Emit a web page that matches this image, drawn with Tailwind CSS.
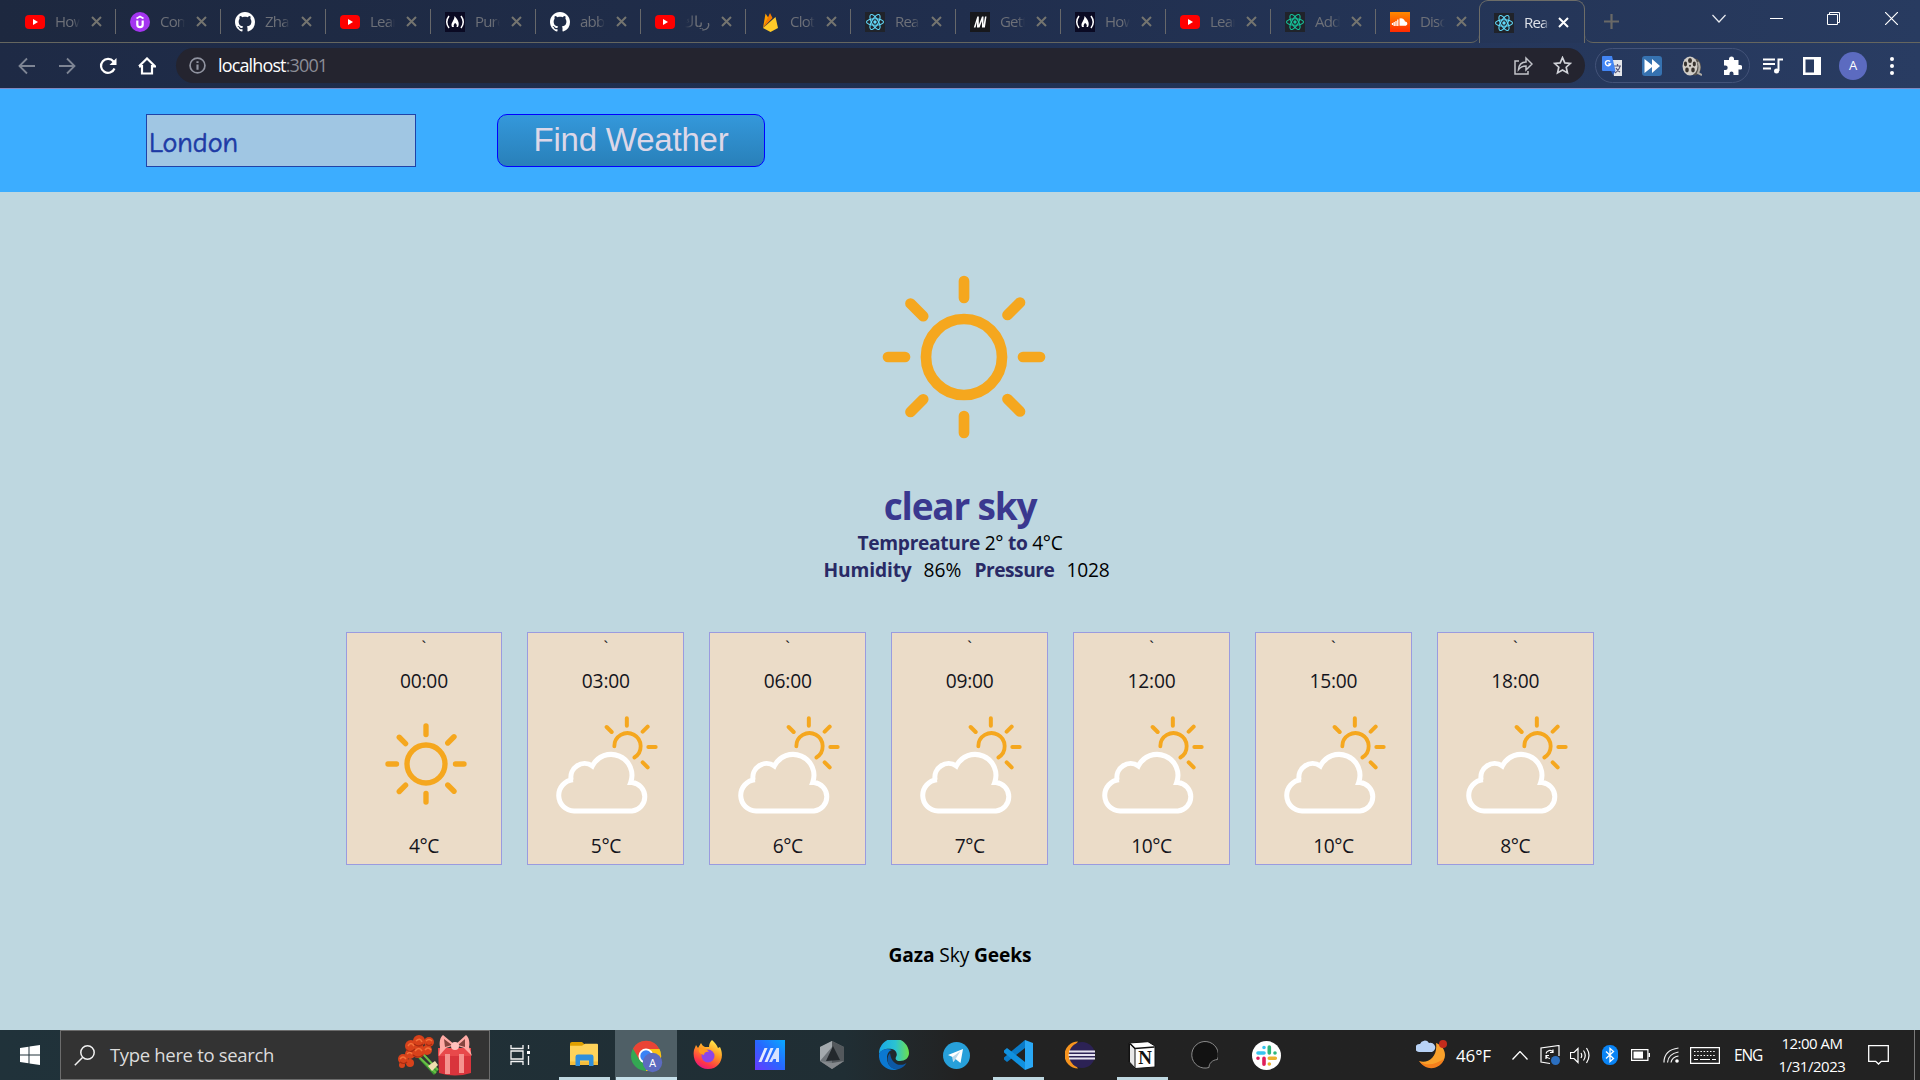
<!DOCTYPE html>
<html lang="en">
<head>
<meta charset="utf-8">
<title>React App</title>
<script src="https://cdn.jsdelivr.net/npm/@tailwindcss/browser@4"></script>
</head>
<body class="w-[1920px] h-[1080px] overflow-hidden flex flex-col font-['Open_Sans',sans-serif] bg-[#bed7e0]">

<svg class="absolute size-0">
  <defs>
    <linearGradient id="sc" x2="0" y2="1"><stop stop-color="#ff8a00"/><stop offset="1" stop-color="#ff2a00"/></linearGradient>
    <symbol id="youtube" viewBox="0 0 20 20"><rect y="3" width="20" height="14" rx="4" fill="#f00"/><path d="M8 7v6l5-3z" fill="#fff"/></symbol>
    <symbol id="udemy" viewBox="0 0 20 20"><circle cx="10" cy="10" r="10" fill="#a435f0"/><path d="M6.500 6.500 10 4.500l3.500 2" fill="none" stroke="#fff" stroke-width="1.700"/><path d="M7.300 8.500v4a2.700 2.700 0 0 0 5.400 0v-4" fill="none" stroke="#fff" stroke-width="2.200"/></symbol>
    <symbol id="github" viewBox="0 0 16 16"><path fill="#fff" d="M8 0C3.580 0 0 3.580 0 8c0 3.540 2.290 6.530 5.470 7.590.4.070.55-.17.55-.38 0-.19-.01-.82-.01-1.490-2.010.37-2.530-.49-2.690-.94-.09-.23-.48-.94-.82-1.130-.28-.15-.68-.52-.01-.53.63-.01 1.080.58 1.230.82.72 1.210 1.870.87 2.330.66.07-.52.28-.87.51-1.070-1.780-.2-3.640-.89-3.640-3.950 0-.87.31-1.590.82-2.150-.08-.2-.36-1.020.08-2.120 0 0 .67-.21 2.200.82.64-.18 1.320-.27 2-.27s1.360.09 2 .27c1.530-1.040 2.200-.82 2.200-.82.44 1.100.16 1.920.08 2.120.51.56.82 1.270.82 2.150 0 3.070-1.870 3.750-3.650 3.950.29.25.54.73.54 1.480 0 1.070-.01 1.930-.01 2.200 0 .21.15.46.55.38A8.010 8.010 0 0 0 16 8c0-4.420-3.580-8-8-8z"/></symbol>
    <symbol id="fcc" viewBox="0 0 20 20"><rect width="20" height="20" fill="#0a0a23"/><path d="M4 4Q-.5 10 4 16M16 4q4.500 6 0 12" fill="none" stroke="#fff" stroke-width="1.500"/><path d="M9.500 4c3 3 5.500 7 3.500 11h-1.500c1-2-.5-3.500-1.500-4-1 1.500-2 2.500-1 4H7c-2-4 2.500-6 2.500-11z" fill="#fff"/></symbol>
    <symbol id="firebase" viewBox="0 0 20 20"><path d="M3 16 5.500 1.500 8.500 6z" fill="#ffa000"/><path d="M3 16 10 1l2.500 5z" fill="#f57c00"/><path d="M3 16 15.500 5 18 16l-7.500 4z" fill="#ffca28"/></symbol>
    <symbol id="react" viewBox="0 0 20 20"><rect width="20" height="20" fill="#20232a"/><g fill="none" stroke="currentColor" stroke-width="1.100"><ellipse cx="10" cy="10" rx="8.500" ry="3.300"/><ellipse cx="10" cy="10" rx="8.500" ry="3.300" transform="rotate(60 10 10)"/><ellipse cx="10" cy="10" rx="8.500" ry="3.300" transform="rotate(120 10 10)"/></g><circle cx="10" cy="10" r="1.700" fill="currentColor"/></symbol>
    <symbol id="mui" viewBox="0 0 20 20"><rect width="20" height="20" fill="#17181c"/><path d="M3.800 15.500 7.300 4.500h1.500v8.500L12 4.500h1.500V13L15 4.500h1.500l-1.600 11H12V9l-2.500 6.500H7V10l-1.500 5.500z" fill="#fff"/></symbol>
    <symbol id="soundcloud" viewBox="0 0 20 20"><rect width="20" height="20" fill="url(#sc)"/><path d="M9.500 6.500A4 4 0 0 1 15 9.500a2.200 2.200 0 0 1 .8 4.300H9.500z" fill="#fff"/><path d="M2.500 11v2M4.200 10v4M6 9v5M7.800 7.500V14" stroke="#fff" stroke-width="1.300"/></symbol>
    <symbol id="sun" viewBox="-84 -84 168 168"><g fill="none" stroke="#f5a71e" stroke-width="10.700" stroke-linecap="round"><circle r="38"/><path d="M0-76v17M0 59v17M-76 0h17M59 0h17M-53.500-53.500l12.700 12.700M56-54.500 43.500-42M-53.500 55l12.700-12.700M43.500 42 56 54.500"/></g></symbol>
    <symbol id="cloud-sun" viewBox="640 280 324 306"><g fill="none" stroke="#f5a71e" stroke-width="12" stroke-linecap="round"><path stroke-width="11.500" d="M824 377A39.500 39.500 0 1 1 884 410.500"/><path d="M861.500 293v22M801 319l15 15M924 318l-15 15M926 379h22M909 425l15 15"/></g><path fill="none" stroke="#fff" stroke-width="15" d="M703 571H877A43 43 0 0 0 877 485.500H873A62.700 62.700 0 0 0 758 436 41 41 0 0 0 694.500 478L700 477.300A46.950 46.950 0 0 0 703 571z"/></symbol>
  </defs>
</svg>

<!-- Tab strip -->
<header class="h-[43px] shrink-0 flex bg-linear-to-r from-[#1d283f] via-[#202e4d] to-[#283b60]">
  <div id="tabs" class="flex h-[43px] w-[1479px] shrink-0 rounded-br-[8px] border-b border-[#65665f] pl-[11px]"></div>
  <div class="flex h-[43px] w-[106px] shrink-0 items-center rounded-t-[9px] border border-b-0 border-[#6d6d68] pl-[14px] pt-px">
    <svg class="size-5 text-[#61dafb]"><use href="#react"/></svg>
    <span class="ml-[10px] w-[25px] overflow-hidden whitespace-nowrap text-[15px] text-[#dde1e8] tracking-[-0.8px] mask-r-from-75%">React</span>
    <svg class="ml-[9px] size-[11px]" viewBox="0 0 11 11" stroke="#fff" stroke-width="2"><path d="m1 1 9 9M10 1 1 10"/></svg>
  </div>
  <div class="flex flex-1 items-start rounded-bl-[8px] border-b border-[#65665f] pl-[19px]">
    <svg class="mt-[14px] size-[15px]" viewBox="0 0 15 15" stroke="#696967" stroke-width="2.200"><path d="M7.500 0v15M0 7.500h15"/></svg>
    <svg class="ml-[93px] mt-[14px] h-[9px] w-[14px]" viewBox="0 0 14 9" fill="none" stroke="#e8ebf0" stroke-width="1.200"><path d="m.5 1 6.500 7L13.500 1"/></svg>
    <svg class="ml-[44px] mt-[18px] h-px w-[13px]"><rect width="13" height="1" fill="#fff"/></svg>
    <svg class="ml-[44px] mt-[12px] size-[13px]" viewBox="0 0 13 13" fill="none" stroke="#fff"><path d="M.5 2.500h10v10H.5zM2.500 2.500v-2h10v10h-2"/></svg>
    <svg class="ml-[45px] mt-[12px] size-[13px]" viewBox="0 0 13 13" stroke="#fff" stroke-width="1.200"><path d="m0 0 13 13M13 0 0 13"/></svg>
  </div>
</header>

<!-- Toolbar -->
<nav class="h-[46px] shrink-0 flex items-center border-b border-[#7f88c0] bg-linear-to-r from-[#1e2a45] via-[#203052] to-[#293c62] pl-[18px]">
  <svg class="size-[18px]" viewBox="0 0 18 18" fill="none" stroke="#7e8594" stroke-width="1.800"><path d="M17 9H2M9 1.500 1.500 9 9 16.500"/></svg>
  <svg class="ml-[22px] size-[18px]" viewBox="0 0 18 18" fill="none" stroke="#7e8594" stroke-width="1.800"><path d="M1 9h15M9 1.500 16.500 9 9 16.500"/></svg>
  <svg class="ml-[23px] size-[18px]" viewBox="0 0 18 18" fill="none" stroke="#fff" stroke-width="2.200"><path d="M15.500 11.500A7 7 0 1 1 14.500 4.500L16 6"/><path d="M17.500 1v7h-7z" fill="#fff" stroke="none"/></svg>
  <svg class="ml-[21px] size-[18px]" viewBox="0 0 18 18" fill="none" stroke="#fff" stroke-width="2.200"><path d="M4 8v8.500h10V8M1 9.300 9 1.500l8 7.800h-3M1 9.300h3"/></svg>
  <div class="ml-[20px] flex h-[35px] w-[1409px] shrink-0 items-center rounded-full bg-[#24242f] pl-[13px]">
    <svg class="size-[17px]" viewBox="0 0 16 16" fill="none" stroke="#9093a0" stroke-width="1.600"><circle cx="8" cy="8" r="7"/><path stroke-width="2" d="M8 7v5M8 4v1.700"/></svg>
    <span class="ml-[12px] whitespace-nowrap text-[18px] tracking-[-0.86px] text-[#8b8d97]"><span class="text-white">localhost</span>:3001</span>
    <svg class="ml-auto mr-[20px] size-[19px]" viewBox="0 0 19 19" fill="none" stroke="#c2c4ca" stroke-width="1.500"><path d="M5 5H1v13h13v-3"/><path d="M4.500 13.500c.5-5 3.500-7.500 7.500-7.500V2l6 6-6 6v-4c-3.500 0-5.500 1-7.500 3.500z"/></svg>
    <svg class="mr-[13px] size-[19px]" viewBox="0 0 18 18" fill="none" stroke="#d0d2d8" stroke-width="1.600"><path d="m9 1.500 2.200 5 5.300.5-4 3.600 1.200 5.400L9 13.200 4.300 16l1.200-5.400-4-3.600 5.300-.5z"/></svg>
  </div>
  <div class="ml-[10px] flex h-[35px] w-[155px] shrink-0 items-center gap-[20px] rounded-full border border-[#435379] pl-[6px]">
    <svg class="size-5" viewBox="0 0 20 20"><path d="M9 4h11v16H12z" fill="#e4e6ea"/><path d="M12 10h7M15.500 8v2M13 17c3-2 4.500-4 5-7M14 12c1 2 2 3 4 4" fill="none" stroke="#557" stroke-width="1.200"/><path d="M1 0h9l3.500 15H1a1 1 0 0 1-1-1V1a1 1 0 0 1 1-1z" fill="#4285f4"/><path d="M9 15h4.500L11 19z" fill="#2b5dc0"/><path d="M8 5.500A2.600 2.600 0 1 0 8.500 8H6.200" fill="none" stroke="#fff" stroke-width="1.400"/></svg>
    <svg class="size-5" viewBox="0 0 20 20"><rect width="20" height="20" rx="3" fill="#3672b0"/><path d="M2.500 3 10 9V3l8 7-8 7v-6l-7.500 6z" fill="#fff"/></svg>
    <svg class="size-5" viewBox="0 0 20 20"><ellipse cx="13" cy="11" rx="6" ry="8.500" fill="#55524e"/><path d="M16 6q3 5 0 11l4 2" fill="none" stroke="#b0aca5" stroke-width="2"/><ellipse cx="8" cy="10" rx="7.500" ry="9.500" fill="#d1cdc7"/><g fill="#37322e"><ellipse cx="8" cy="4.500" rx="2" ry="2.600"/><ellipse cx="3.500" cy="8" rx="1.600" ry="2.400"/><ellipse cx="12.300" cy="8" rx="1.600" ry="2.400"/><ellipse cx="5" cy="14" rx="1.800" ry="2.400"/><ellipse cx="11" cy="14" rx="1.800" ry="2.400"/><circle cx="8" cy="9.700" r="1"/></g></svg>
    <svg class="size-5" viewBox="0 0 20 20"><path fill="#fff" d="M7 3a2.500 2.500 0 0 1 5 0v1h4.500v5H18a2.300 2.300 0 0 1 0 4.600h-1.500V19h-5v-1.500a2 2 0 0 0-4 0V19H2v-5h1.500a2.200 2.200 0 0 0 0-4.400H2V4h5z"/></svg>
  </div>
  <svg class="ml-[13px] h-[16px] w-[20px]" viewBox="0 0 20 16" fill="none" stroke="#fff" stroke-width="2"><path d="M0 1.500h12M0 6h12M0 10.500h8M15.500 13V1.500H20"/><circle cx="13.500" cy="13" r="2.500" fill="#fff" stroke="none"/></svg>
  <svg class="ml-[20px] size-[18px]" viewBox="0 0 18 18"><path fill="#fff" fill-rule="evenodd" d="M0 0h18v18H0zM2.500 2.500v13H11v-13z"/></svg>
  <div class="ml-[18px] flex size-7 items-center justify-center rounded-full bg-[#5c6bc0] text-[13px] text-white">A</div>
  <svg class="ml-[23px] h-[18px] w-[4px]" viewBox="0 0 4 18" fill="#fff"><circle cx="2" cy="2" r="2"/><circle cx="2" cy="9" r="2"/><circle cx="2" cy="16" r="2"/></svg>
</nav>

<!-- Search form -->
<form class="h-[103px] shrink-0 flex items-start bg-[#3cadff] pl-[146px] pt-[25px]">
  <div class="flex h-[53px] w-[270px] items-center border border-[#1f43a8] bg-[#a0c6e3] pl-[2px] pt-[4px] font-['Comic_Sans_MS','Comic_Neue','Noto_Sans',sans-serif] text-[28px] text-[#1d3aa5] [-webkit-text-stroke:0.6px_#1d3aa5]">London</div>
  <div class="ml-[81px] flex h-[53px] w-[268px] justify-center rounded-[10px] border border-[#0000ff] bg-linear-to-b from-[#3498db] to-[#2980b9] pt-[5px] font-['Liberation_Sans',sans-serif] text-[33px] leading-[40px] tracking-[-0.2px] text-[#dcd7e8]">Find Weather</div>
</form>

<!-- Current weather -->
<main class="flex flex-1 flex-col items-center text-[19.200px] leading-[27px]">
  <svg class="ml-[7px] mt-[81px] size-[168px]"><use href="#sun"/></svg>
  <h1 class="mt-[38px] text-[37px] leading-[54px] font-bold tracking-[-1.2px] text-[#3a388f]">clear sky</h1>
  <p class="mt-[-4px] tracking-[-0.32px]"><b class="text-[#292a66]">Tempreature</b> 2° <b class="text-[#292a66]">to</b> 4°C</p>
  <p class="flex pl-[13px]"><b class="tracking-[-0.15px] text-[#292a66]">Humidity</b><span class="ml-[12px]">86%</span><b class="ml-[13px] tracking-[-0.48px] text-[#292a66]">Pressure</b><span class="ml-[12px] tracking-[-0.22px]">1028</span></p>

  <section id="hours" class="mt-[49px] flex gap-[25px] self-start pl-[345.500px] text-[#14141c]"></section>

  <footer class="mt-[76px] tracking-[-0.12px] text-black"><b>Gaza</b> Sky <b>Geeks</b></footer>
</main>

<!-- Taskbar -->
<footer class="h-[50px] shrink-0 flex items-center bg-linear-to-r from-[#20323a] from-0% via-[#202e34] via-44% to-[#222222] to-50%">
  <div class="flex w-[60px] justify-center"><svg class="size-5" viewBox="0 0 20 20" fill="#fff"><path d="M0 3l8.500-1.300v7.800H0zM9.500 1.500 20 0v9.500H9.500zM0 10.500h8.500v7.800L0 17zM9.500 10.500H20V20L9.500 18.500z"/></svg></div>
  <div class="flex h-[50px] w-[430px] items-center border border-[#6c6c6c] bg-[#333333] pl-[13px]">
    <svg class="size-[21px]" viewBox="0 0 21 21" fill="none" stroke="#f2f2f2" stroke-width="1.500"><circle cx="13.500" cy="7.500" r="6.700"/><path d="M8.500 12.500.8 20.200"/></svg>
    <span class="ml-[15px] whitespace-nowrap text-[18.500px] tracking-[-0.33px] text-[#dcdcdc]">Type here to search</span>
    <svg class="ml-auto mr-[17px] h-[42px] w-[74px]" viewBox="0 0 74 42">
      <path d="m20 24 20 12-4 5z" fill="#3c9a32"/><path d="M20 22l18 17M25 20l15 16" stroke="#69bf45" stroke-width="2"/><path d="m30 32 7-5 3 4-6 6z" fill="#f0dfb0"/>
      <g fill="#d8421b"><circle cx="13" cy="12" r="6"/><circle cx="21" cy="7" r="6"/><circle cx="31" cy="8" r="5"/><circle cx="29" cy="16" r="5"/><circle cx="20" cy="17" r="7"/><circle cx="12" cy="20" r="5"/><circle cx="5" cy="25" r="5"/><circle cx="12" cy="29" r="4"/><circle cx="4" cy="31" r="3"/></g>
      <g fill="none" stroke="#a82c12" stroke-width="1.200"><path d="M8 15q4 5 9 0M16 10q5 4 9 0M15 21q5 4 10 0M2 28q4 3 7 0M28 10q3 3 6 0"/></g>
      <g fill="none" stroke="#f5713a" stroke-width="1.500"><path d="M10 12q3-5 6 0M18 7q4-4 6 1M17 17q4-5 7 0M27 16q3-4 6 0M28 7q3-3 6 0M2 25q3-4 6 0M9 20q3-3 5 0"/></g>
      <path d="M40 15h33v24q-16 5-32 0z" fill="#d9343c"/><path d="M40 14h33v8H40z" fill="#e8494b"/><path d="M47 20h5v20h-5zM61 20h5v19h-5z" fill="#f5938f"/>
      <path d="M57 11 45 1c-3 2-4 8-3 12l-1 9 7-8zM57 11 68 1c3 2 4 8 3 12l3 9-8-8z" fill="#ffaaa5"/><path d="m46 5 8 6-7 2zM67 5l-7 6 7 2z" fill="#86453f"/><circle cx="57" cy="12" r="4" fill="#ffc1bd"/>
    </svg>
  </div>
  <div class="flex w-[63px] justify-center pr-[3px]"><svg class="size-5" viewBox="0 0 20 20" fill="none" stroke="#f5f5f5" stroke-width="1.300"><path d="M1 0v3.500h12V0M1 20v-3.500h12V20M1 6h12v8H1zM18.500 0v4M18.500 11v9"/><path d="M17 6h3v3h-3z" fill="#fff" stroke="none"/></svg></div>

  <div class="flex h-[50px] w-[62px] flex-col items-center justify-end">
    <svg class="mb-[11px] h-[24px] w-[28px]" viewBox="0 0 28 26" preserveAspectRatio="none"><path d="M0 2a2 2 0 0 1 2-2h10l3 3v5H0z" fill="#dfa000"/><path d="M0 4h12l3-2h12a1 1 0 0 1 1 1v21a1 1 0 0 1-1 1H1a1 1 0 0 1-1-1z" fill="#ffd35a"/><path d="M0 21h28v3a1 1 0 0 1-1 1H1a1 1 0 0 1-1-1z" fill="#f5bd3b"/><path d="M5.500 26V16a2.500 2.500 0 0 1 2.500-2.500h13a2.500 2.500 0 0 1 2.500 2.500v10h-4.500v-6h-9v6z" fill="#2f8fdc"/></svg>
    <div class="h-[3px] w-[51px] bg-[#bed7e0]"></div>
  </div>
  <div class="flex h-[50px] w-[62px] flex-col items-center justify-end bg-[#4f5f66]">
    <svg class="mb-[4px] ml-[2px] size-[34px]" viewBox="0 0 34 34"><circle cx="16" cy="17" r="15" fill="#34a853"/><path d="M16 17H31A15 15 0 0 1 16 32z" fill="#fbbc04"/><path d="M3 9.500A15 15 0 0 1 29.500 10H16l-6.500 11z" fill="#ea4335"/><path d="M16 10h13.500A15 15 0 0 1 16 32l6.500-11z" fill="#fbc116"/><circle cx="16" cy="17" r="7.500" fill="#fff"/><circle cx="16" cy="17" r="5.700" fill="#3b82f6"/><circle cx="22.500" cy="23.500" r="9.700" fill="#5c6bc0"/><text x="22.500" y="27.500" text-anchor="middle" font-size="11" fill="#fff" font-family="Roboto">A</text></svg>
    <div class="h-[3px] w-[61px] bg-[#c6e0ea]"></div>
  </div>
  <div class="flex w-[62px] justify-center"><svg class="size-[30px]" viewBox="0 0 30 30"><defs><linearGradient id="ff" x1=".8" y1="0" x2=".3" y2="1"><stop stop-color="#fff44f"/><stop offset=".45" stop-color="#ff9422"/><stop offset=".8" stop-color="#ff3647"/><stop offset="1" stop-color="#e31587"/></linearGradient></defs><path d="M19 0c3 3 5 5 6 8l2-1c5 10 0 22-12 22C5 29-1 20 1 10l2-5 2 3 3-5c1 2 2 3 4 4h4c0-3 1-5 3-7z" fill="url(#ff)"/><circle cx="15" cy="16" r="6.500" fill="#8d45e8"/><path d="M6 9c4-2 8 0 10 3-3-1-5 1-5 3-4-1-6-3-5-6z" fill="#ff9a1f"/></svg></div>
  <div class="flex w-[62px] justify-center"><svg class="size-[30px]" viewBox="0 0 30 30"><defs><linearGradient id="ma" x1="0" y1="1" x2="1" y2="0"><stop stop-color="#6a38ff"/><stop offset=".5" stop-color="#2867ff"/><stop offset="1" stop-color="#08aaff"/></linearGradient></defs><rect width="30" height="30" fill="url(#ma)"/><path d="M3.500 22 9.500 8h3L6.500 22zM9.500 22l6-14h3l-6 14z" fill="#e3eaff"/><path d="M14 22 21.500 8H24v14h-3v-3h-2.500L17 22z" fill="#d5e2ff"/></svg></div>
  <div class="flex w-[62px] justify-center"><svg class="h-[28px] w-[26px]" viewBox="1 0 26 28"><path d="M14 0 2 6v14l12 8 12-8V6z" fill="#6d7378"/><path d="M14 0 2 6v14l12-14z" fill="#a3a9ad"/><path d="M14 0v28l12-8V6z" fill="#53585c"/><path d="m15 5 7 14-14 1z" fill="#23282c"/><path d="m2 20 12 8 12-8-12 2z" fill="#85898d"/></svg></div>
  <div class="flex w-[62px] justify-center"><svg class="size-[30px]" viewBox="0 0 30 30"><defs><linearGradient id="e1"><stop stop-color="#18a8e8"/><stop offset=".55" stop-color="#2bc3d2"/><stop offset="1" stop-color="#6de04c"/></linearGradient></defs><path d="M0 14A15 15 0 0 1 30 13c0 5-4 8-9 8-4 0-5-2-4-4 2-3 0-7-4-8C7 8 2 10 0 14z" fill="url(#e1)"/><path d="M0 14c2-5 8-6 13-4-4 1-5 5-5 8 0 6 4 11 11 11.500C9 32-1 25 0 14z" fill="#0b78d1"/><path d="M11 13c-6 7 0 18 9 16 3-1 6-3 7.500-6-6 4-15 2-16.500-10z" fill="#0c58a5"/></svg></div>
  <div class="flex w-[62px] justify-center"><svg class="size-[27px]" viewBox="0 0 27 27"><circle cx="13.500" cy="13.500" r="13.500" fill="#27a0da"/><path d="m5 13 15-6-2.500 14-5-4-2.500 3-.5-5z" fill="#fff"/><path d="m9.500 15 8-6-5 8-2 3z" fill="#b9d8ea"/></svg></div>
  <div class="flex h-[50px] w-[62px] flex-col items-center justify-end">
    <svg class="mb-[7px] size-[30px]" viewBox="0 0 30 30"><path d="M22 0v8L4 22l-3-2.500v-2z" fill="#0a7bc8"/><path d="M22 30v-8L4 8 1 10.500v2z" fill="#1091e0"/><path d="m22 0 8 3v24l-8 3z" fill="#2aa8f5"/></svg>
    <div class="h-[3px] w-[51px] bg-[#bed7e0]"></div>
  </div>
  <div class="flex w-[62px] justify-center"><svg class="size-[30px]" viewBox="0 0 30 30"><path d="M13 1.500A13.500 13.500 0 0 0 13 28.500L10 24V6z" fill="#f7941e"/><circle cx="17" cy="15" r="13" fill="#2c2255"/><path d="M4 11.500h26M3.500 15h27M4 18.500h26" stroke="#e6e3f0" stroke-width="2"/></svg></div>
  <div class="flex h-[50px] w-[62px] flex-col items-center justify-end">
    <svg class="mb-[8px] size-[28px]" viewBox="0 0 28 28"><path d="M1 2 20 .7 27 5v21L7 27.500 1 21z" fill="#fff" stroke="#111"/><path d="M1.500 2.500 7 8v19L1.500 21z" fill="#e8e8e8" stroke="#111"/><path d="M2 2.500 7 7.500 26.500 6" fill="none" stroke="#111" stroke-width="1.500"/><text x="17" y="23" text-anchor="middle" font-family="Liberation Serif" font-weight="bold" font-size="19" fill="#111">N</text></svg>
    <div class="h-[3px] w-[51px] bg-[#bed7e0]"></div>
  </div>
  <div class="flex w-[62px] justify-center"><svg class="size-[28px]" viewBox="0 0 28 28"><path d="M27.500 18.500A13.300 13.300 0 1 0 19 26.500c0-4 3-7.500 8.500-8z" fill="#121212" stroke="#8a8a8a"/></svg></div>
  <div class="flex w-[62px] justify-center"><svg class="size-[29px]" viewBox="0 0 29 29" stroke-width="3.600" stroke-linecap="round"><circle cx="14.500" cy="14.500" r="14.500" fill="#fff"/><path d="M12 6.500v0M6 12h6" stroke="#36c5f0"/><path d="M17.300 6v6M23 12v0" stroke="#2eb67d"/><path d="M17.300 17.300h6M17.300 23v0" stroke="#ecb22e"/><path d="M12 17.300v6M6 17.300v0" stroke="#e01e5a"/></svg></div>

  <div class="ml-auto flex h-[50px] w-[504px] items-center whitespace-nowrap text-white">
    <svg class="h-[30px] w-[31px]" viewBox="0 0 31 30"><path d="M20 3c5 2 9 6 9 12 0 10-15 19-26 6 9 3 19-4 17-18z" fill="#f9a12b"/><path d="M3 21c8 6 17 3 25-2-2 8-16 15-25 2z" fill="#f47f1c"/><path d="M3 12a4 4 0 0 1 1-8 5 5 0 0 1 9-1 4.500 4.500 0 0 1 3 9z" fill="#b8d2f5"/><circle cx="27" cy="4" r="4" fill="#c42b1c"/></svg>
    <span class="ml-[9px] pt-[2px] text-[17px] tracking-[-0.13px]">46°F</span>
    <svg class="ml-[21px] h-[9px] w-[16px]" viewBox="0 0 16 9" fill="none" stroke="#fff" stroke-width="1.300"><path d="m.5 8.500 7.500-8 7.500 8"/></svg>
    <svg class="ml-[12px] size-[20px]" viewBox="0 0 20 20" fill="none" stroke="#fff" stroke-width="1.200"><path d="M10 18.500 1 17V3l18-2.500V11"/><path d="M6 8.500a4 4 0 0 1 7-1.500M13 4.500v3h-3M6 14v-3.500h3M6 11c1 2 2.500 2.500 4 2.500"/><circle cx="15.500" cy="15.500" r="4.500" fill="#2b6fc0" stroke="none"/></svg>
    <svg class="ml-[10px] h-[17px] w-[20px]" viewBox="0 0 20 17" fill="none" stroke="#fff" stroke-width="1.200"><path d="M.5 5.500H4l4-4v14l-4-4H.5zM11 6q1.500 2.500 0 5M13.500 3.500q3.500 5 0 10M16.500 1q5 7.500 0 15"/></svg>
    <svg class="ml-[12px] h-[20px] w-[16px]" viewBox="0 0 16 20"><rect width="16" height="20" rx="7.500" fill="#0a84f5"/><path d="m4 6.500 7.500 7L8 16.500v-13l3.500 3-7.500 7" fill="none" stroke="#fff" stroke-width="1.300"/></svg>
    <svg class="ml-[13px] h-[12px] w-[19px]" viewBox="0 0 19 12"><path d="M.6.600h16.300v10.800H.6z" fill="none" stroke="#fff" stroke-width="1.200"/><path d="M2.500 2.500H12v7H2.500zM17.500 4H19v4h-1.500z" fill="#fff"/></svg>
    <svg class="ml-[13px] size-[16px]" viewBox="0 0 16 16" fill="none" stroke="#f0f0f0" stroke-width="1.200"><path d="M1 15.500Q1 3 15.500 1M4.500 15.500Q5 7 15.500 5M8 15.500Q9 10 15.500 9"/><circle cx="14" cy="14" r="1.800" fill="#fff" stroke="none"/></svg>
    <svg class="ml-[11px] h-[17px] w-[30px]" viewBox="0 0 30 17" fill="none" stroke="#fff" stroke-width="1.200"><path d="M.6.600h28.800v15.800H.6z"/><path stroke-dasharray="1.500 1.700" d="M4 4.500h22M4 8.500h22"/><path d="M4 12.500h4M10 12.500h10M22 12.500h4"/></svg>
    <span class="ml-[14px] w-[28px] pt-px text-[15.500px] tracking-[-1.1px]">ENG</span>
    <div class="ml-[15px] flex w-[70px] flex-col items-center pb-[1px] text-[15px] leading-[23px]"><span class="tracking-[-0.52px]">12:00 AM</span><span class="tracking-[-0.45px]">1/31/2023</span></div>
    <svg class="ml-[21px] h-[20px] w-[21px]" viewBox="0 0 21 20" fill="none" stroke="#fff" stroke-width="1.300"><path d="M.7.700h19.600v15.600h-7L10.500 19l-2.800-2.700h-7z"/></svg>
    <div class="ml-auto mr-[5px] h-[50px] w-px bg-[#7a7a7a]"></div>
  </div>
</footer>

<script>
  const tabs = [['youtube','How'],['udemy','Com'],['github','Zha'],['youtube','Lear'],['fcc','Pure'],['github','abb'],['youtube','رياك'],['firebase','Clot'],['react','Rea'],['mui','Gett'],['fcc','How'],['youtube','Lear'],['react','Add'],['soundcloud','Disc']];
  document.getElementById('tabs').innerHTML = tabs.map(([icon, title], i) => `
    <div class="mt-[9px] flex h-[25px] w-[105px] shrink-0 items-center pl-[14px] ${i === 13 ? '' : 'border-r border-[#67686a]'}">
      <svg class="size-5 shrink-0 ${i === 12 ? 'text-[#15c39a]' : 'text-[#61dafb]'}"><use href="#${icon}"/></svg>
      <span dir="auto" class="ml-[10px] w-[25px] overflow-hidden whitespace-nowrap text-[15px] text-[#6d7078] ${i === 6 ? 'mask-l-from-60%' : 'tracking-[-0.8px] mask-r-from-70%'}">${title}</span>
      <svg class="ml-[11px] size-[11px] shrink-0" viewBox="0 0 11 11" stroke="#74746f" stroke-width="2"><path d="m1 1 9 9M10 1 1 10"/></svg>
    </div>`).join('');

  const hours = [['00:00', 4], ['03:00', 5], ['06:00', 6], ['09:00', 7], ['12:00', 10], ['15:00', 10], ['18:00', 8]];
  document.getElementById('hours').innerHTML = hours.map(([time, temp], i) => `
    <article class="flex h-[233px] w-[156.900px] shrink-0 flex-col items-center border border-[#9a9bdf] bg-[#ebdcc8]">
      <span class="text-[17px]">\`</span>
      <time class="mt-[7px] tracking-[-0.19px]">${time}</time>
      ${i ? '<svg class="ml-[3px] mt-[20px] h-[102px] w-[108px]"><use href="#cloud-sun"/></svg>' : '<svg class="ml-[4px] mt-[28px] mb-[10px] size-[84px]"><use href="#sun"/></svg>'}
      <span class="mt-[16px] tracking-[-0.45px]">${temp}°C</span>
    </article>`).join('');
</script>
</body>
</html>
